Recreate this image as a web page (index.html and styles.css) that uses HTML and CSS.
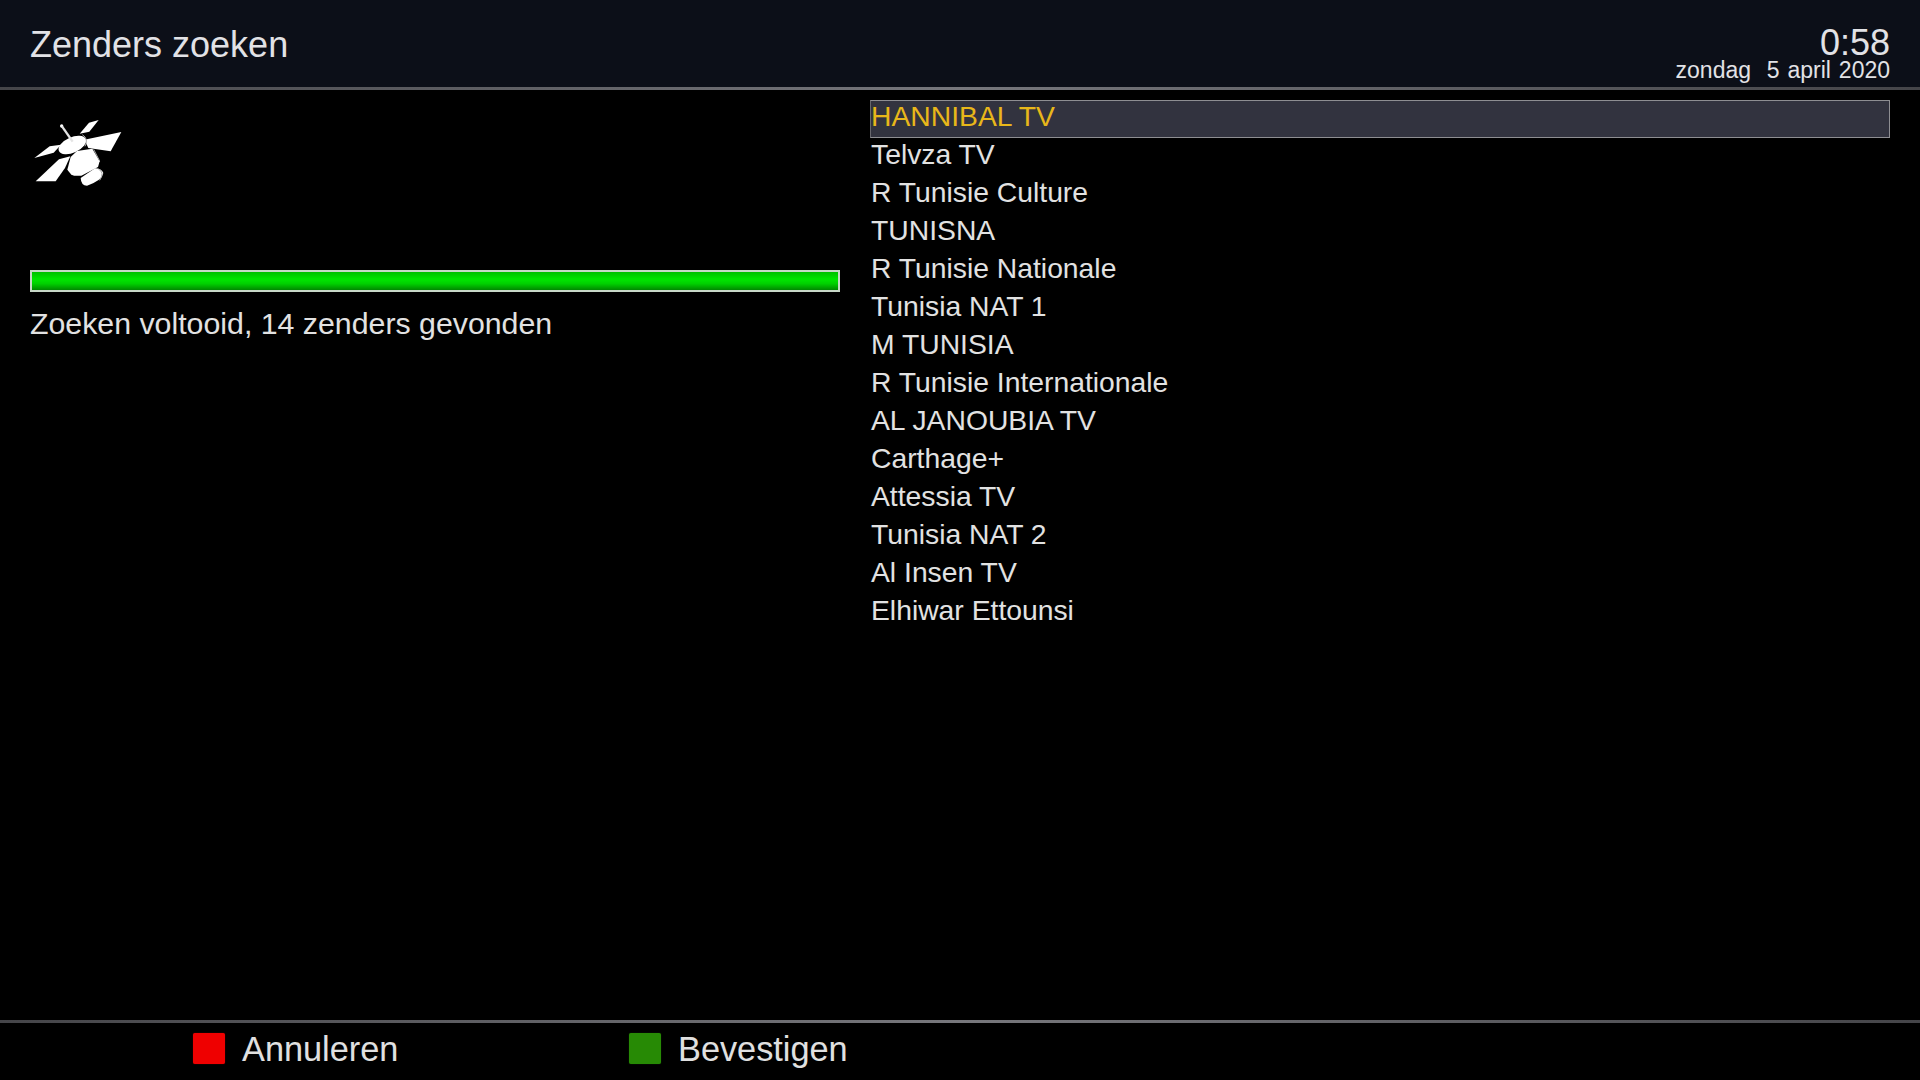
FILE: index.html
```html
<!DOCTYPE html>
<html lang="nl">
<head>
<meta charset="utf-8">
<title>Zenders zoeken</title>
<link rel="stylesheet" href="styles.css">
</head>
<body>
<div class="screen">
  <header class="top">
    <div class="title">Zenders zoeken</div>
    <div class="clock">
      <div class="time">0:58</div>
      <div class="date">zondag&nbsp; 5 april 2020</div>
    </div>
  </header>
  <div class="rule"></div>
  <main class="main">
    <section class="left">
      <svg class="sat" viewBox="100 355 270 210" aria-hidden="true">
        <g fill="#fff">
          <polygon points="240,402 268,369 297,361 269,396"/>
          <polygon points="254,420 365,397 333,455 266,445"/>
          <polygon points="104,475 150,440 184,435 162,459"/>
          <polygon points="108,545 178,479 212,470 196,505 168,545"/>
          <path d="M203 510L213 472L232 454L278 447L300 485L295 502L245 528Q225 530 215 525Z"/>
          <path d="M243 535L286 506Q306 506 311 520Q308 542 262 558Q244 558 243 535Z"/>
          <ellipse cx="218" cy="436" rx="44" ry="23" transform="rotate(-24 218 436)"/>
          <circle cx="186" cy="379" r="5"/>
        </g>
        <path d="M187 380L219 426" stroke="#e4e4e4" stroke-width="7" fill="none"/>
        <path d="M248 405Q268 418 256 440M282 449L300 484M296 508Q316 518 300 542" stroke="#aaa" stroke-width="3" fill="none"/>
      </svg>
      <div class="progress"><div class="fill"></div></div>
      <div class="status">Zoeken voltooid, 14 zenders gevonden</div>
    </section>
    <section class="list">
      <div class="row selected">HANNIBAL TV</div>
      <div class="row">Telvza TV</div>
      <div class="row">R Tunisie Culture</div>
      <div class="row">TUNISNA</div>
      <div class="row">R Tunisie Nationale</div>
      <div class="row">Tunisia NAT 1</div>
      <div class="row">M TUNISIA</div>
      <div class="row">R Tunisie Internationale</div>
      <div class="row">AL JANOUBIA TV</div>
      <div class="row">Carthage+</div>
      <div class="row">Attessia TV</div>
      <div class="row">Tunisia NAT 2</div>
      <div class="row">Al Insen TV</div>
      <div class="row">Elhiwar Ettounsi</div>
    </section>
  </main>
  <div class="rule"></div>
  <footer class="bottom">
    <div class="btn btn-red"><span class="key red"></span><span class="label">Annuleren</span></div>
    <div class="btn btn-green"><span class="key green"></span><span class="label">Bevestigen</span></div>
  </footer>
</div>
</body>
</html>
```
FILE: styles.css
```css
* { box-sizing: border-box; }
html, body { margin: 0; height: 100%; background: #000; overflow: hidden; }
body { font-family: "Liberation Sans", Arial, sans-serif; color: #e6e6e6; }
.screen { width: 1920px; height: 1080px; display: flex; flex-direction: column; }

.top { height: 87px; background: #0c0f18; display: flex; justify-content: space-between; padding: 0 30px; }
.title { font-size: 36px; line-height: 42px; padding-top: 24px; color: #e2e2e6; }
.clock { text-align: right; padding-top: 27px; }
.time { font-size: 36px; line-height: 32px; color: #e2e2e6; }
.date { font-size: 23px; line-height: 22px; word-spacing: 1.5px; color: #e2e2e6; }

.rule { height: 3px; flex: none; background: linear-gradient(90deg, #454549, #77777c 50%, #454549); }

.main { flex: 1; display: flex; padding: 10px 30px 0; }
.left { width: 810px; flex: none; margin-right: 30px; }
.sat { display: block; width: 90px; height: 70px; margin: 18px 0 0 3px; }
.progress { width: 810px; height: 22px; margin-top: 82px; border: 2px solid #c8d8c8; background: #000; }
.fill { height: 100%; background: linear-gradient(#00c000, #00e600 40%, #00d000 65%, #008800); }
.status { font-size: 30.3px; line-height: 35px; margin-top: 14px; color: #e2e2e2; }

.list { flex: 1; }
.row { height: 38px; font-size: 28.3px; line-height: 33px; padding-left: 1px; color: #e2e2e2; }
.row.selected { background: #32333f; border: 1px solid #8e8e92; border-left-color: #66666c; color: #e8b71a; padding-left: 0; line-height: 31px; }

.bottom { height: 57px; display: flex; }
.btn { display: flex; align-items: center; height: 52px; }
.btn-red { margin-left: 193px; width: 436px; }
.key { width: 32px; height: 31px; border-radius: 2px; flex: none; margin-bottom: 1px; }
.red { background: #ef0000; box-shadow: 0 0 1px #a00000; }
.green { background: #278a05; box-shadow: 0 0 1px #1a5c03; }
.label { font-size: 34.3px; margin-left: 17px; color: #e0e0e0; }
```
